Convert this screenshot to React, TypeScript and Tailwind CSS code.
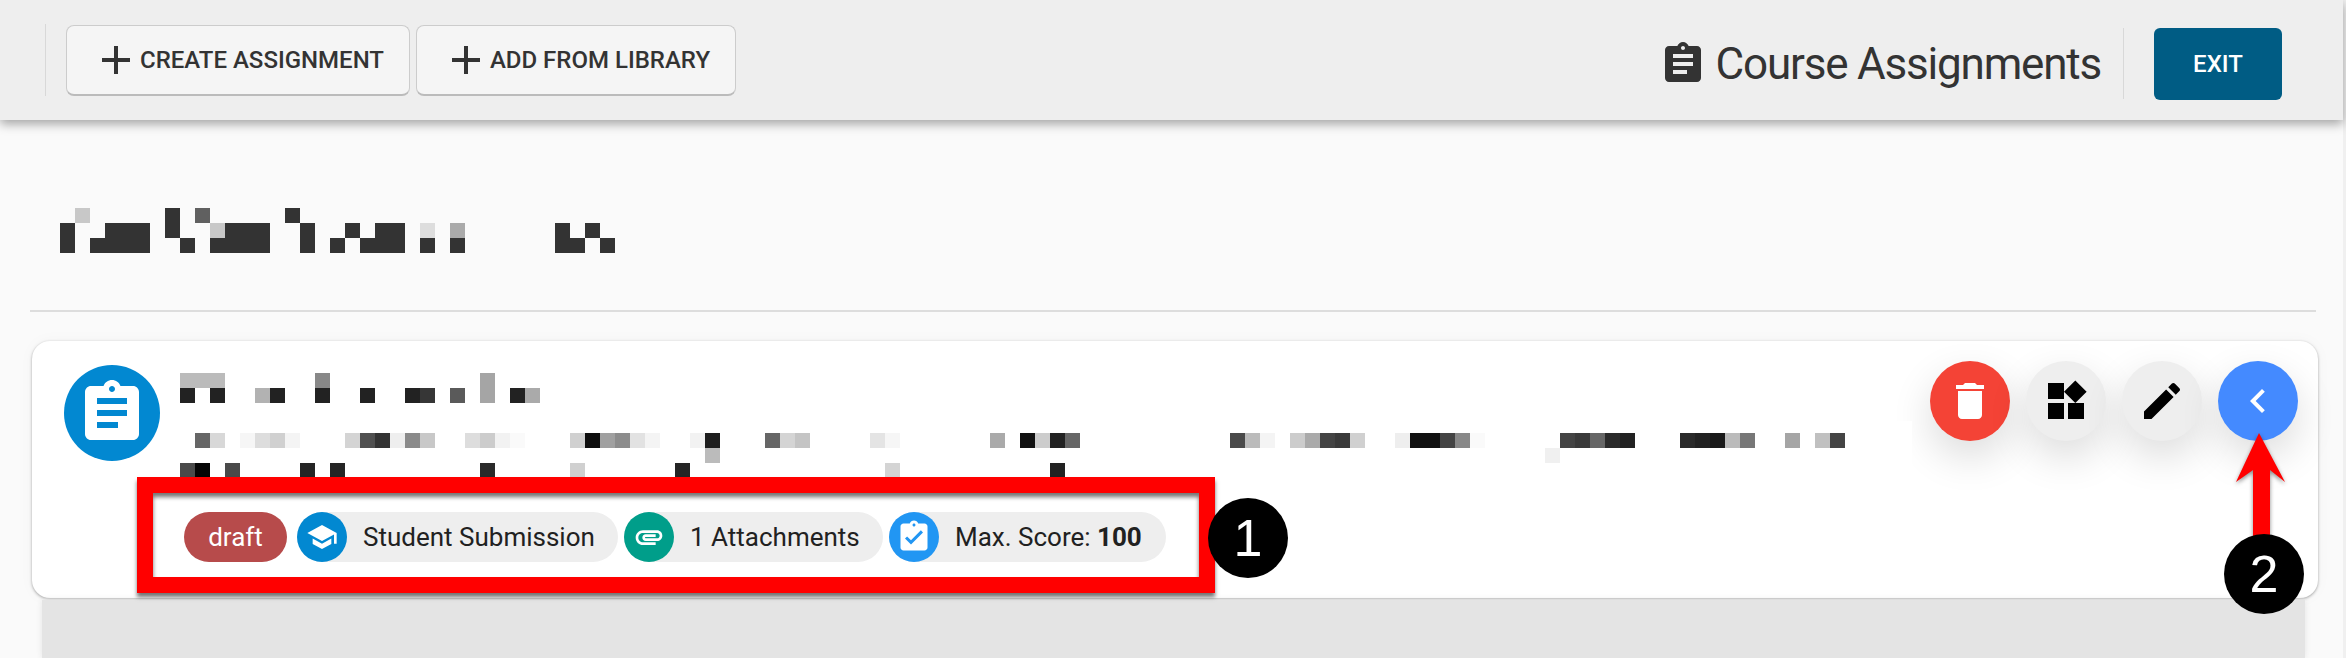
import React from 'react';

type Cell = [number, number, string];

const ASSIGNMENT =
  'M19 3h-4.18C14.4 1.84 13.3 1 12 1c-1.3 0-2.4.84-2.82 2H5c-1.1 0-2 .9-2 2v14c0 1.1.9 2 2 2h14c1.1 0 2-.9 2-2V5c0-1.1-.9-2-2-2zm-7 0c.55 0 1 .45 1 1s-.45 1-1 1-1-.45-1-1 .45-1 1-1zm2 14H7v-2h7v2zm3-4H7v-2h10v2zm0-4H7V7h10v2z';
const TURNED_IN =
  'M19 3h-4.18C14.4 1.84 13.3 1 12 1c-1.3 0-2.4.84-2.82 2H5c-1.1 0-2 .9-2 2v14c0 1.1.9 2 2 2h14c1.1 0 2-.9 2-2V5c0-1.1-.9-2-2-2zm-7 0c.55 0 1 .45 1 1s-.45 1-1 1-1-.45-1-1 .45-1 1-1zm-2 14l-4-4 1.41-1.41L10 14.17l6.59-6.59L18 9l-8 8z';
const ADD = 'M19 13h-6v6h-2v-6H5v-2h6V5h2v6h6v2z';
const SCHOOL = 'M5 13.18v4L12 21l7-3.82v-4L12 17l-7-3.82zM12 3L1 9l11 6 9-4.91V17h2V9L12 3z';
const ATTACH =
  'M2 12.5C2 9.46 4.46 7 7.5 7H18c2.21 0 4 1.79 4 4s-1.79 4-4 4H9.5C8.12 15 7 13.88 7 12.5S8.12 10 9.5 10H17v2H9.41c-.55 0-.55 1 0 1H18c1.1 0 2-.9 2-2s-.9-2-2-2H7.5C5.57 9 4 10.57 4 12.5S5.57 16 7.5 16H17v2H7.5C4.46 18 2 15.54 2 12.5z';
const DELETE = 'M6 19c0 1.1.9 2 2 2h8c1.1 0 2-.9 2-2V7H6v12zM19 4h-3.5l-1-1h-5l-1 1H5v2h14V4z';
const WIDGETS = 'M13 13v8h8v-8h-8zM3 21h8v-8H3v8zM3 3v8h8V3H3zm13.66-1.31L11 7.34 16.66 13l5.66-5.66-5.66-5.65z';
const EDIT =
  'M3 17.25V21h3.75L17.81 9.94l-3.75-3.75L3 17.25zM20.71 7.04c.39-.39.39-1.02 0-1.41l-2.34-2.34c-.39-.39-1.02-.39-1.41 0l-1.83 1.83 3.75 3.75 1.83-1.83z';
const CHEVRON = 'M15.41 7.41L14 6l-6 6 6 6 1.41-1.41L10.83 12z';

// blurred-out text in the screenshot, 15px cells
const dark = '#333333';
const headingCells: Cell[] = [
  [1, 0, '#c8c8c8'], [7, 0, dark], [9, 0, '#606060'], [15, 0, dark],
  [0, 1, dark], [3, 1, dark], [4, 1, dark], [5, 1, dark], [7, 1, dark], [10, 1, '#c8c8c8'], [11, 1, dark], [12, 1, dark], [13, 1, dark],
  [16, 1, dark], [19, 1, dark], [21, 1, dark], [22, 1, dark], [24, 1, '#dddddd'], [26, 1, '#aaaaaa'], [33, 1, dark], [35, 1, dark],
  [0, 2, dark], [2, 2, dark], [3, 2, dark], [4, 2, dark], [5, 2, dark], [8, 2, dark], [10, 2, dark], [11, 2, dark], [12, 2, dark], [13, 2, dark],
  [16, 2, dark], [18, 2, dark], [20, 2, dark], [21, 2, dark], [22, 2, dark], [24, 2, dark], [26, 2, dark], [33, 2, dark], [34, 2, dark], [36, 2, dark],
];

const cardCells: Cell[] = [
  [0, 0, '#bbbbbb'], [1, 0, '#bbbbbb'], [2, 0, '#bbbbbb'], [9, 0, '#888888'], [20, 0, '#a5a5a5'],
  [0, 1, '#222222'], [2, 1, '#222222'], [5, 1, '#b2b2b2'], [6, 1, '#222222'], [9, 1, '#222222'], [12, 1, '#222222'], [15, 1, '#222222'], [16, 1, '#363636'],
  [18, 1, '#5a5a5a'], [20, 1, '#a5a5a5'], [22, 1, '#222222'], [23, 1, '#aaaaaa'],

  [1, 4, '#666666'], [2, 4, '#d8d8d8'], [4, 4, '#f6f6f6'], [5, 4, '#dddddd'], [6, 4, '#d0d0d0'], [7, 4, '#f4f4f4'],
  [11, 4, '#d4d4d4'], [12, 4, '#505050'], [13, 4, '#333333'], [14, 4, '#eeeeee'], [15, 4, '#8a8a8a'], [16, 4, '#c8c8c8'],
  [19, 4, '#dddddd'], [20, 4, '#cccccc'], [21, 4, '#f2f2f2'], [22, 4, '#fafafa'],
  [26, 4, '#d0d0d0'], [27, 4, '#0e0e0e'], [28, 4, '#a0a0a0'], [29, 4, '#8c8c8c'], [30, 4, '#e2e2e2'], [31, 4, '#f4f4f4'],
  [34, 4, '#f2f2f2'], [35, 4, '#1e1e1e'], [39, 4, '#666666'], [40, 4, '#d4d4d4'], [41, 4, '#c4c4c4'],
  [46, 4, '#e4e4e4'], [47, 4, '#f6f6f6'], [54, 4, '#aaaaaa'], [56, 4, '#111111'], [57, 4, '#cccccc'], [58, 4, '#222222'], [59, 4, '#666666'],
  [70, 4, '#4a4a4a'], [71, 4, '#bbbbbb'], [72, 4, '#f4f4f4'], [74, 4, '#cccccc'], [75, 4, '#aaaaaa'], [76, 4, '#444444'], [77, 4, '#3a3a3a'], [78, 4, '#d0d0d0'],
  [81, 4, '#eeeeee'], [82, 4, '#111111'], [83, 4, '#111111'], [84, 4, '#444444'], [85, 4, '#888888'], [86, 4, '#fafafa'],
  [92, 4, '#444444'], [93, 4, '#3a3a3a'], [94, 4, '#666666'], [95, 4, '#2a2a2a'], [96, 4, '#222222'],
  [100, 4, '#2a2a2a'], [101, 4, '#222222'], [102, 4, '#1a1a1a'], [103, 4, '#bbbbbb'], [104, 4, '#777777'], [107, 4, '#a5a5a5'], [109, 4, '#c0c0c0'], [110, 4, '#444444'],

  [35, 5, '#bbbbbb'], [91, 5, '#f0f0f0'],

  [0, 6, '#4a4a4a'], [1, 6, '#050505'], [3, 6, '#4a4a4a'], [8, 6, '#252525'], [10, 6, '#252525'], [20, 6, '#2a2a2a'], [26, 6, '#d0d0d0'], [33, 6, '#252525'],
  [47, 6, '#d4d4d4'], [58, 6, '#222222'],
];

const Icon = ({ d, size, className }: { d: string; size: number; className?: string }) => (
  <svg viewBox="0 0 24 24" width={size} height={size} fill="currentColor" className={className}>
    <path d={d} />
  </svg>
);

const Mosaic = ({ cells, width, height, children }: { cells: Cell[]; width: number; height: number; children?: React.ReactNode }) => (
  <svg width={width} height={height} shapeRendering="crispEdges" className="block shrink-0">
    {children}
    {cells.map(([c, r, fill]) => (
      <rect key={`${c}-${r}`} x={c * 15} y={r * 15} width={15} height={15} fill={fill} />
    ))}
  </svg>
);

const ToolbarButton = ({ label, className }: { label: string; className: string }) => (
  <button className={`flex h-[71px] items-center justify-center rounded-lg border border-b-2 border-[#cccccc] border-b-[#bbbbbb] bg-[#f5f5f5] text-[24px] font-medium text-[#333333] ${className}`}>
    <Icon d={ADD} size={48} />
    <span>{label}</span>
  </button>
);

const Chip = ({ icon, iconSize, color, width, children }: { icon: string; iconSize: number; color: string; width: string; children: React.ReactNode }) => (
  <div className={`flex h-[50px] items-center rounded-full bg-[#eeeeee] text-[26px] text-[#212121] ${width}`}>
    <span className={`flex size-[50px] shrink-0 items-center justify-center rounded-full text-white ${color}`}>
      <Icon d={icon} size={iconSize} />
    </span>
    <span className="ml-[16px] whitespace-nowrap">{children}</span>
  </div>
);

const Fab = ({ icon, className }: { icon: string; className: string }) => (
  <button className={`flex size-[80px] items-center justify-center rounded-full shadow-[0_16px_40px_rgba(0,0,0,0.14)] ${className}`}>
    <Icon d={icon} size={48} />
  </button>
);

const Marker = ({ n, className }: { n: string; className: string }) => (
  <div className={`absolute z-30 flex size-[80px] items-center justify-center rounded-full bg-black font-['Liberation_Sans',sans-serif] text-[52px] leading-none text-white ${className}`}>
    {n}
  </div>
);

export default function App() {
  return (
    <div className="relative flex h-[658px] w-[2346px] overflow-hidden bg-[#f0f0f0] font-['Roboto',sans-serif]">
      <div className="flex w-[2343px] flex-col bg-[#fafafa]">
        <header className="relative z-10 flex h-[120px] shrink-0 items-center bg-[#eeeeee] pl-[45px] pr-[61px] shadow-[0_4px_10px_rgba(0,0,0,0.35)]">
          <div className="h-[72px] w-[1px] bg-[#d8d8d8]" />
          <ToolbarButton label="CREATE ASSIGNMENT" className="ml-[20px] w-[344px]" />
          <ToolbarButton label="ADD FROM LIBRARY" className="ml-[6px] w-[320px]" />
          <div className="ml-auto mt-[8px] flex items-center">
            <Icon d={ASSIGNMENT} size={48} className="text-[#333333]" />
            <span className="ml-[9px] whitespace-nowrap text-[44px] leading-none tracking-[-1.2px] text-[#333333]">Course Assignments</span>
          </div>
          <div className="ml-[22px] mt-[7px] h-[71px] w-[1px] bg-[#d8d8d8]" />
          <button className="ml-[30px] mt-[8px] h-[72px] w-[128px] rounded-md bg-[#005c84] text-[24px] font-medium text-white">EXIT</button>
        </header>

        <main className="flex flex-1 flex-col pl-[30px] pr-[27px]">
          <div className="mt-[88px] ml-[30px]">
            <Mosaic cells={headingCells} width={600} height={45} />
          </div>
          <div className="mt-[57px] h-[2px] bg-[#dddddd]" />

          <section className="mt-[29px] ml-[2px] flex h-[257px] w-[2286px] shrink-0 flex-col rounded-[18px] bg-white shadow-[0_1px_3px_rgba(0,0,0,0.35),0_0_16px_rgba(0,0,0,0.03)]">
            <div className="flex h-[171px] items-start">
              <div className="ml-[32px] mt-[24px] flex size-[96px] shrink-0 items-center justify-center rounded-full bg-[#0288d1] text-white">
                <Icon d={ASSIGNMENT} size={72} />
              </div>
              <div className="relative z-[1] ml-[20px] mt-[32px]">
                <Mosaic cells={cardCells} width={1732} height={130}>
                  <rect x={0} y={48} width={1732} height={82} fill="#ffffff" />
                </Mosaic>
              </div>
              <div className="ml-[18px] mt-[20px] flex gap-[16px]">
                <Fab icon={DELETE} className="bg-[#f44336] text-white" />
                <Fab icon={WIDGETS} className="bg-[#eeeeee] text-black" />
                <Fab icon={EDIT} className="bg-[#eeeeee] text-black" />
                <Fab icon={CHEVRON} className="bg-[#448aff] text-white" />
              </div>
            </div>

            <div className="ml-[152px] flex items-center gap-[6px]">
              <div className="mr-[4px] flex h-[50px] w-[103px] items-center justify-center rounded-full bg-[#b74b4b] text-[26px] text-white">draft</div>
              <Chip icon={SCHOOL} iconSize={32} color="bg-[#0288d1]" width="w-[321px]">Student Submission</Chip>
              <Chip icon={ATTACH} iconSize={32} color="bg-[#009e8a]" width="w-[259px]">1 Attachments</Chip>
              <Chip icon={TURNED_IN} iconSize={36} color="bg-[#2196f3]" width="w-[277px]">
                Max. Score: <b className="font-bold">100</b>
              </Chip>
            </div>
          </section>

          <div className="ml-[12px] mt-[2px] w-[2263px] flex-1 bg-[#e4e4e4] shadow-[0_0_6px_#e4e4e4]" />
        </main>
      </div>

      {/* annotations on top of the screenshot */}
      <div className="absolute left-[137px] top-[477px] z-20 h-[116px] w-[1078px] border-[16px] border-[#ff0000] shadow-[0_4px_4px_rgba(0,0,0,0.55),inset_0_4px_4px_rgba(0,0,0,0.55)]" />
      <Marker n="1" className="left-[1208px] top-[498px]" />
      <svg width={60} height={110} viewBox="2232 430 60 110" className="absolute left-[2232px] top-[430px] z-20 drop-shadow-[0_2px_2px_rgba(0,0,0,0.45)]">
        <polygon points="2259,433 2285,482 2270,470 2270,540 2253,540 2253,470 2236,482" fill="#ff0000" />
      </svg>
      <Marker n="2" className="left-[2224px] top-[534px]" />
    </div>
  );
}
